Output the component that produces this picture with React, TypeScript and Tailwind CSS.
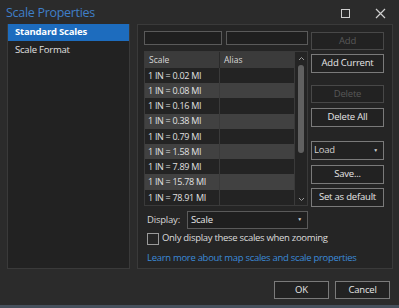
import React from 'react'

const scales = [
  '1 IN = 0.02 MI',
  '1 IN = 0.08 MI',
  '1 IN = 0.16 MI',
  '1 IN = 0.38 MI',
  '1 IN = 0.79 MI',
  '1 IN = 1.58 MI',
  '1 IN = 7.89 MI',
  '1 IN = 15.78 MI',
  '1 IN = 78.91 MI',
]

function Btn({ label, disabled, className = '' }: { label: string; disabled?: boolean; className?: string }) {
  return (
    <div
      className={`flex items-center justify-center border text-[9.5px] tracking-[-0.2px] ${
        disabled ? 'border-[#484848] text-[#585858]' : 'border-[#7a7a7a] text-[#e6e6e6]'
      } bg-[#222222] ${className}`}
    >
      {label}
    </div>
  )
}

export default function App() {
  return (
    <div
      className="w-[399px] h-[308px] bg-[#2b2b2b] flex flex-col text-[#e6e6e6] overflow-hidden"
      style={{ fontFamily: '"Open Sans", "Noto Sans", sans-serif' }}
    >
      {/* Title bar */}
      <div className="h-[24px] flex items-center pl-[6px] pr-[12px] pt-[3px]">
        <span className="text-[12.5px] tracking-[-0.3px] text-[#3f7fc8] leading-none">Scale Properties</span>
        <div className="flex-1" />
        <div className="w-[9px] h-[9px] border border-[#cfcfcf] mr-[25px]" />
        <svg width="11" height="11" viewBox="0 0 11 11" className="mr-[1px]">
          <path d="M1 1L10 10M10 1L1 10" stroke="#cfcfcf" strokeWidth="1.2" />
        </svg>
      </div>

      {/* Body */}
      <div className="flex pl-[7px] gap-[7px]">
        {/* Left nav */}
        <div className="w-[123px] h-[245px] bg-[#222222] border border-[#3a3a3a] border-t-0">
          <div className="h-[17px] bg-[#1d6cbe] flex items-center pl-[7px] text-[9.5px] tracking-[-0.2px] font-bold text-white">
            Standard Scales
          </div>
          <div className="h-[18px] flex items-center pl-[7px] text-[9.5px] tracking-[-0.2px] text-[#e0e0e0]">
            Scale Format
          </div>
        </div>

        {/* Right panel */}
        <div className="w-[256px] h-[245px] bg-[#252525] border border-[#3a3a3a] pl-[6px] pt-[6px]">
          <div className="flex gap-[3px]">
            <div className="w-[164px] flex flex-col">
              <div className="flex gap-[4px]">
                <div className="w-[78px] h-[14px] border border-[#5a5a5a] bg-[#1f1f1f]" />
                <div className="w-[82px] h-[14px] border border-[#5a5a5a] bg-[#1f1f1f]" />
              </div>

              {/* Table */}
              <div className="mt-[6px] h-[155px] flex border border-[#3a3a3a]">
                <div className="w-[149px] flex flex-col">
                  <div className="h-[16px] flex bg-[#3b3b3b] text-[8.5px] text-[#d8d8d8]">
                    <div className="w-[75px] pl-[4px] flex items-center border-r border-[#2a2a2a]">Scale</div>
                    <div className="flex-1 pl-[4px] flex items-center">Alias</div>
                  </div>
                  {scales.map((s, i) => (
                    <div
                      key={s}
                      className={`h-[15.4px] flex text-[9px] tracking-[-0.3px] text-[#e0e0e0] ${
                        i % 2 === 0 ? 'bg-[#232323]' : 'bg-[#414141]'
                      }`}
                    >
                      <div className="w-[75px] pl-[3px] flex items-center border-r border-[#3a3a3a] whitespace-nowrap">
                        {s}
                      </div>
                      <div className="flex-1" />
                    </div>
                  ))}
                </div>
                {/* Scrollbar */}
                <div className="flex-1 bg-[#242424] flex flex-col items-center border-l border-[#3a3a3a] pt-[4px] pb-[3px]">
                  <svg width="7" height="5" viewBox="0 0 7 5">
                    <path d="M1 4L3.5 1.5L6 4" stroke="#9a9a9a" strokeWidth="1" fill="none" />
                  </svg>
                  <div className="w-[6px] h-[88px] rounded-full bg-[#606060] mt-[4px]" />
                  <div className="flex-1" />
                  <svg width="7" height="5" viewBox="0 0 7 5">
                    <path d="M1 1L3.5 3.5L6 1" stroke="#9a9a9a" strokeWidth="1" fill="none" />
                  </svg>
                </div>
              </div>

              {/* Display */}
              <div className="mt-[5px] flex items-center h-[18px] pl-[3px]">
                <span className="text-[9.5px] tracking-[-0.2px] text-[#d6d6d6] w-[40px] shrink-0">Display:</span>
                <div className="w-[121px] h-[18px] border border-[#5a5a5a] bg-[#1f1f1f] flex items-center pl-[3px] pr-[5px] text-[9.5px] tracking-[-0.2px]">
                  <span className="flex-1">Scale</span>
                  <span className="text-[5px] text-[#cfcfcf]">▼</span>
                </div>
              </div>
              <div className="mt-[3px] flex items-center h-[13px] pl-[3px] gap-[3px]">
                <div className="w-[12px] h-[12px] shrink-0 border border-[#9a9a9a]" />
                <span className="text-[9.5px] tracking-[-0.3px] text-[#dcdcdc] whitespace-nowrap">
                  Only display these scales when zooming
                </span>
              </div>
              <div className="mt-[6px] pl-[3px] text-[9.5px] tracking-[-0.3px] text-[#3b8ad8] whitespace-nowrap">
                Learn more about map scales and scale properties
              </div>
            </div>

            {/* Button column */}
            <div className="w-[73px] flex flex-col">
              <Btn label="Add" disabled className="h-[18px] mt-[1px]" />
              <Btn label="Add Current" className="h-[19px] mt-[4px]" />
              <Btn label="Delete" disabled className="h-[18px] mt-[12px]" />
              <Btn label="Delete All" className="h-[19px] mt-[5px]" />
              <div className="h-[19px] mt-[14px] border border-[#7a7a7a] bg-[#222222] flex items-center pl-[2px] pr-[5px] text-[9.5px] tracking-[-0.2px] text-[#d0d0d0]">
                <span className="flex-1">Load</span>
                <span className="text-[5px]">▼</span>
              </div>
              <Btn label="Save..." className="h-[19px] mt-[5px]" />
              <Btn label="Set as default" className="h-[19px] mt-[4px]" />
            </div>
          </div>
        </div>
      </div>

      {/* Footer */}
      <div className="flex justify-end gap-[6px] pr-[9px] mt-[12px]">
        <Btn label="OK" className="w-[55px] h-[18px]" />
        <Btn label="Cancel" className="w-[55px] h-[18px]" />
      </div>
      <div className="flex-1" />
      <div className="h-[3px] bg-[#46505c]" />
    </div>
  )
}
